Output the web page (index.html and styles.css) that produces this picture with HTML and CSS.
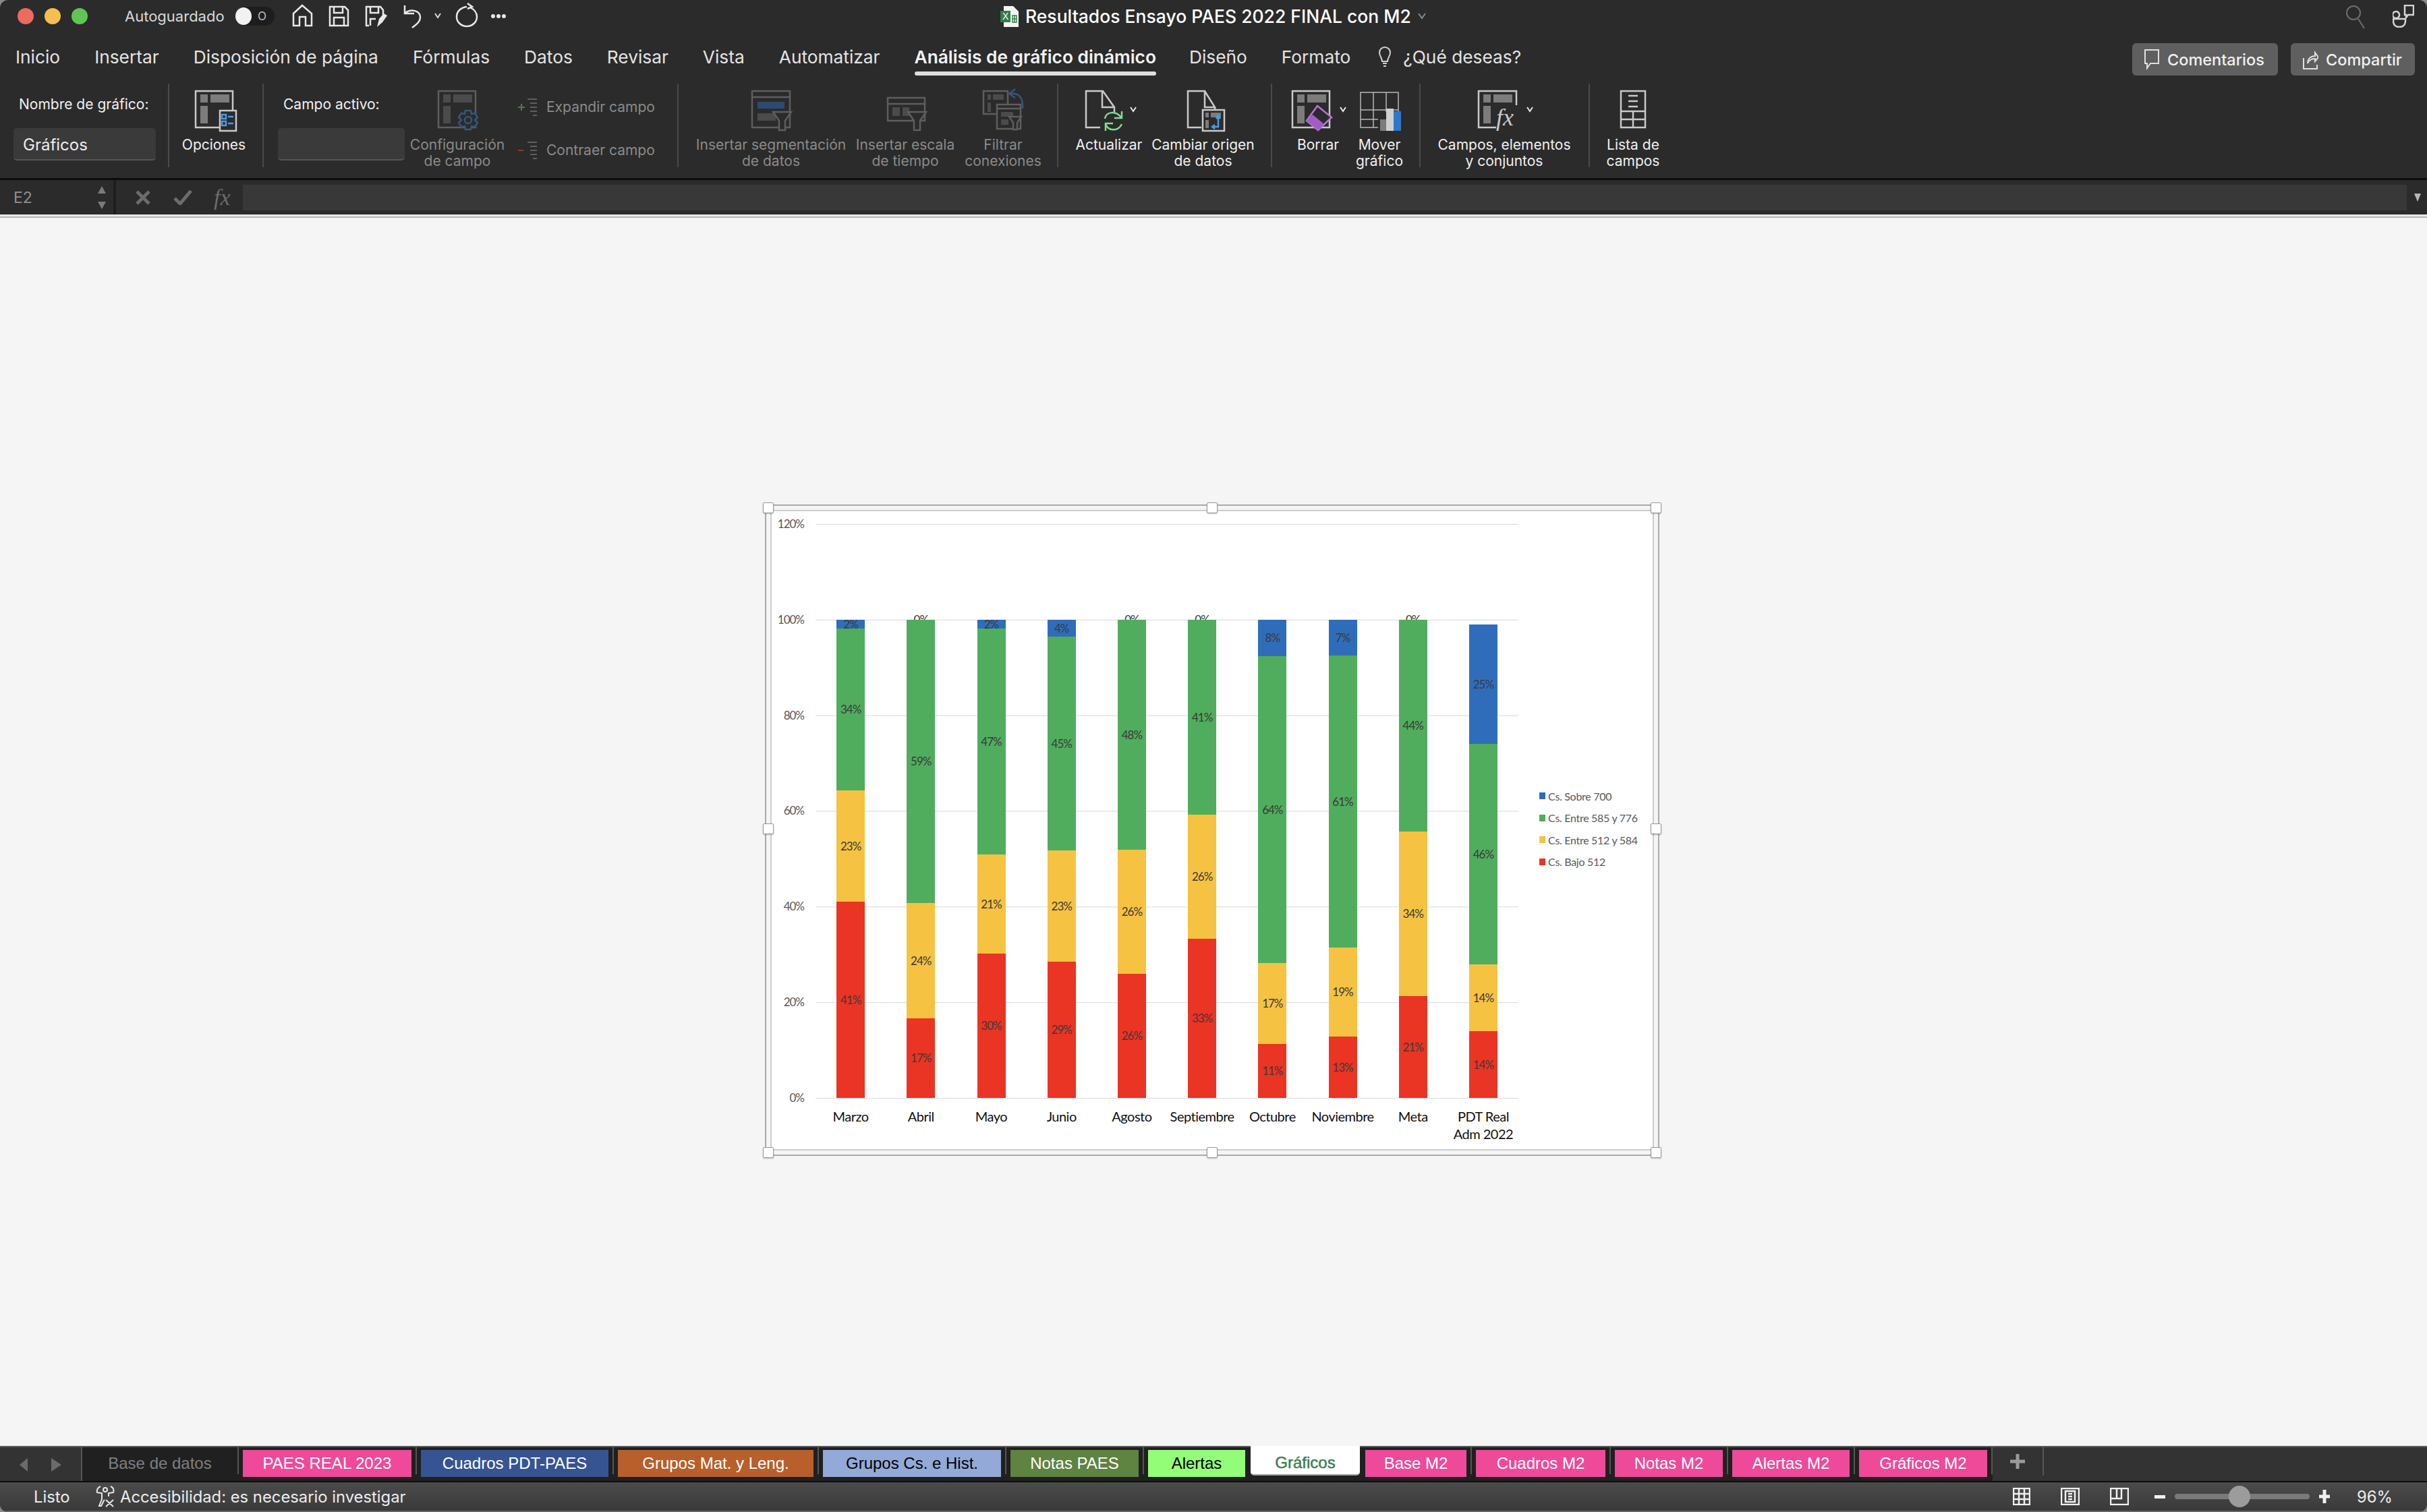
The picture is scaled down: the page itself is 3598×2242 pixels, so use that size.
FILE: index.html
```html
<!DOCTYPE html>
<html lang="es">
<head>
    <meta charset="UTF-8">
    <title>Resultados Ensayo PAES 2022 FINAL con M2</title>
    <link rel="stylesheet" href="styles.css">
</head>
<body>
<div class="app">
    <!-- title bar -->
    <div class="titlebar">
        <span class="light red"></span><span class="light yellow"></span><span class="light green"></span>
        <span class="autosave">Autoguardado</span>
        <span class="toggle"><span class="knob"></span><span class="toggle-o">O</span></span>
        <svg class="qa" width="320" height="40" viewBox="0 0 320 40">
            <path class="qa-line" d="M1 16 14 4 28 16V34H19V21H10V34H1Z"/>
            <path class="qa-line" d="M55 6h22l5 5v23H55ZM61 6v9h13V6M61 34V22h15v12"/>
            <path class="qa-line" d="M113 34h-4V6h21l4 5v9M115 6v9h12V6M115 34V24h8"/>
            <path class="qa-fill" d="M125 36l3-12 7-8 5 3-7 10z"/>
            <path class="qa-line" d="M166 4v12h14M167 15c8-6 22-4 22 7 0 7-7 11-12 15"/>
            <path class="qa-thin" d="M211 16l4 6 4-6"/>
            <path class="qa-line" d="M258 6c-8 1-15 6-15 15 0 8 7 14 15 14s15-6 15-14c0-7-4-11-10-14M259 1l7 5-7 3"/>
            <circle class="qa-dot" cx="305" cy="20" r="3"/><circle class="qa-dot" cx="313" cy="20" r="3"/><circle class="qa-dot" cx="297" cy="20" r="3"/>
        </svg>
        <svg class="file-icon" width="27" height="31" viewBox="0 0 27 31">
            <path class="file-page" d="M5 0h14l8 8v23H5Z"/>
            <rect class="file-x" x="0" y="7" width="15" height="17"/>
            <path class="file-grid" d="M18 14h6v10h-6zM21 14v10M18 19h6"/>
            <text class="file-x-text" x="3" y="20">X</text>
        </svg>
        <span class="doc-title">Resultados Ensayo PAES 2022 FINAL con M2</span>
        <svg class="doc-chevron" width="12" height="10" viewBox="0 0 12 10"><path d="M1 1l5 7 5-7"/></svg>
        <svg class="search" width="30" height="38" viewBox="0 0 30 38"><circle cx="12" cy="14" r="10"/><path d="M19 23l9 14"/></svg>
        <svg class="people" width="32" height="34" viewBox="0 0 32 34">
            <path d="M18 1h13v14h-8l-3 4v-4h-2zM5 10a5 5 0 1 0 .1 0M1 21h18v3c0 6-4 9-9 9s-9-3-9-9z"/>
        </svg>
    </div>

    <!-- ribbon tabs -->
    <div class="tabs">
        <span class="tab">Inicio</span>
        <span class="tab">Insertar</span>
        <span class="tab">Disposición de página</span>
        <span class="tab">Fórmulas</span>
        <span class="tab">Datos</span>
        <span class="tab">Revisar</span>
        <span class="tab">Vista</span>
        <span class="tab">Automatizar</span>
        <span class="tab tab-active">Análisis de gráfico dinámico</span>
        <span class="tab">Diseño</span>
        <span class="tab">Formato</span>
        <svg class="bulb" width="18" height="32" viewBox="0 0 18 32"><path d="M9 1c5 0 8 4 8 8 0 5-4 8-4 13H5c0-5-4-8-4-13 0-4 3-8 8-8zM6 25h6M7 29h4"/></svg>
        <span class="tell-me">¿Qué deseas?</span>
        <span class="tab-btn tab-btn-first">
            <svg class="btn-icon" width="24" height="32" viewBox="0 0 24 32"><path d="M2 2h20v20H10l-5 7v-7H2z"/></svg>Comentarios
        </span>
        <span class="tab-btn tab-btn-last">
            <svg class="btn-icon" width="24" height="32" viewBox="0 0 24 32"><path d="M2 14v16h20v-6M8 22c0-7 5-11 11-11V6l5 7-5 6v-4c-6 0-9 2-11 7z"/></svg>Compartir
        </span>
    </div>

    <!-- ribbon -->
    <div class="ribbon">
        <div class="group group-name">
            <div class="field-col">
                <span class="field-label">Nombre de gráfico:</span>
                <span class="field field-name">Gráficos</span>
            </div>
        </div>

        <div class="group group-options">
            <div class="item item-options">
                <svg class="icon" width="94" height="75" viewBox="0 0 94 75">
                    <path class="ln" d="M20 7h55v54H20z"/>
                    <rect class="fl" x="27" y="12" width="11" height="12"/><rect class="fl" x="42" y="12" width="28" height="12"/><rect class="fl" x="27" y="29" width="11" height="26"/>
                    <rect class="ln bg" x="56" y="36" width="24" height="30"/>
                    <path class="bl" d="M59 42h6v6h-6zM59 52h6v6h-6zM68 45h8M68 55h8"/>
                </svg>
                <span class="item-label">Opciones</span>
            </div>
        </div>

        <div class="group group-field">
            <div class="field-col field-col-active">
                <span class="field-label">Campo activo:</span>
                <span class="field field-active"></span>
            </div>
            <div class="item item-config off">
                <svg class="icon" width="142" height="75" viewBox="0 0 142 75">
                    <path class="ln" d="M43 7h55v54H43z"/>
                    <rect class="fl" x="50" y="12" width="11" height="12"/><rect class="fl" x="65" y="12" width="28" height="12"/><rect class="fl" x="50" y="29" width="11" height="26"/>
                    <path class="dim-bl bg" d="M83 36h8l1 5 5-1 4 6-4 4 4 4-4 6-5-1-1 5h-8l-1-5-5 1-4-6 4-4-4-4 4-6 5 1z"/>
                    <circle class="dim-bl" cx="87" cy="50" r="5"/>
                </svg>
                <span class="item-label">Configuración<br>de campo</span>
            </div>
            <div class="expand-col off">
                <div class="expand-row">
                    <svg width="30" height="26" viewBox="0 0 30 26"><path class="ex-plus" d="M0 13h10M5 8v10"/><path class="ex-line" d="M14 1h14M18 7h10M18 13h10M18 19h10M22 25h6"/></svg>
                    <span>Expandir campo</span>
                </div>
                <div class="expand-row">
                    <svg width="30" height="26" viewBox="0 0 30 26"><path class="ex-minus" d="M0 13h8"/><path class="ex-line" d="M14 1h14M18 7h10M18 13h10M18 19h10M22 25h6"/></svg>
                    <span>Contraer campo</span>
                </div>
            </div>
        </div>

        <div class="group group-insert off">
            <div class="item item-slicer">
                <svg class="icon" width="224" height="75" viewBox="0 0 224 75">
                    <path class="ln" d="M84 7h56v54H84zM84 16h56"/>
                    <rect class="dim-blf" x="92" y="23" width="40" height="10"/>
                    <rect class="fl" x="92" y="40" width="27" height="11"/>
                    <path class="ln bg" d="M115 38h27l-9 13v14h-9V51z"/>
                </svg>
                <span class="item-label">Insertar segmentación<br>de datos</span>
            </div>
            <div class="item item-timeline">
                <svg class="icon" width="152" height="75" viewBox="0 0 152 75">
                    <path class="ln" d="M50 17h55v34H50zM50 26h55"/>
                    <rect class="fl" x="57" y="31" width="11" height="13"/><rect class="fl" x="72" y="31" width="10" height="13"/>
                    <path class="ln bg" d="M80 38h27l-9 13v14h-9V51z"/>
                </svg>
                <span class="item-label">Insertar escala<br>de tiempo</span>
            </div>
            <div class="item item-filter">
                <svg class="icon" width="116" height="75" viewBox="0 0 116 75">
                    <path class="ln" d="M29 7h36v34H29z"/>
                    <rect class="fl" x="35" y="12" width="5" height="8"/><rect class="fl" x="43" y="12" width="16" height="8"/><rect class="fl" x="35" y="24" width="5" height="14"/>
                    <path class="ln bg" d="M49 27h35v36H49zM49 33h35"/>
                    <rect class="fl" x="55" y="38" width="18" height="7"/><rect class="fl" x="55" y="49" width="11" height="8"/>
                    <path class="ln bg" d="M67 45h18l-6 9v10h-6V54z"/>
                    <path class="dim-bl" d="M76 4l-9 7 9 6M68 11c14-2 20 6 19 22"/>
                </svg>
                <span class="item-label">Filtrar<br>conexiones</span>
            </div>
        </div>

        <div class="group group-data">
            <div class="item item-refresh">
                <svg class="icon" width="100" height="75" viewBox="0 0 100 75">
                    <path class="ln" d="M37 61H16V7h25l17 24v7M40 7v24h18"/>
                    <path class="gr" d="M44 48c2-11 16-12 24-2M45 56c4 11 19 11 24 0M69 37v10H58M45 66V55h11"/>
                    <path class="chev" d="M82 31l4 6 4-6"/>
                </svg>
                <span class="item-label">Actualizar</span>
            </div>
            <div class="item item-source">
                <svg class="icon" width="153" height="75" viewBox="0 0 153 75">
                    <path class="ln" d="M74 61H54V7h25l15 24h-15V7M94 31v4"/>
                    <rect class="ln bg" x="76" y="35" width="32" height="31"/>
                    <rect class="fl" x="80" y="39" width="5" height="7"/><rect class="fl" x="88" y="39" width="15" height="7"/><rect class="fl" x="80" y="50" width="5" height="12"/>
                    <path class="bl" d="M99 44v16h-8M96 48l3-5 3 5M94 57l-4 3 4 3"/>
                </svg>
                <span class="item-label">Cambiar origen<br>de datos</span>
            </div>
        </div>

        <div class="group group-tools">
            <div class="item item-clear">
                <svg class="icon" width="62" height="75" viewBox="0 0 62 75">
                    <path class="ln" d="M-7 7h55v54H-7z"/>
                    <rect class="fl" x="0" y="12" width="11" height="12"/><rect class="fl" x="15" y="12" width="28" height="12"/><rect class="fl" x="0" y="29" width="11" height="26"/>
                    <path class="pu bg" d="M30 29 51 46 31 65 14 51z"/>
                    <path class="pu-fill" d="M14 51l9-9 17 14-9 9z"/>
                    <path class="chev" d="M64 31l4 6 4-6"/>
                </svg>
                <span class="item-label">Borrar</span>
            </div>
            <div class="item item-move">
                <svg class="icon" width="72" height="75" viewBox="0 0 72 75">
                    <path class="ln-thin" d="M8 9h56v52H8zM8 35h56M8 49h56M27 9v52M46 9v52"/>
                    <rect class="bg" x="34" y="38" width="34" height="30"/>
                    <rect class="fl" x="37" y="49" width="9" height="17"/><rect class="wh" x="46" y="33" width="11" height="33"/><rect class="blf" x="57" y="37" width="11" height="29"/>
                </svg>
                <span class="item-label">Mover<br>gráfico</span>
            </div>
        </div>

        <div class="group group-fields">
            <div class="item item-calc">
                <svg class="icon" width="200" height="75" viewBox="0 0 200 75">
                    <path class="ln" d="M62 7h56v54H62z"/>
                    <rect class="fl" x="69" y="12" width="11" height="12"/><rect class="fl" x="84" y="12" width="28" height="12"/><rect class="fl" x="69" y="29" width="11" height="26"/>
                    <rect class="bg" x="88" y="28" width="32" height="38"/>
                    <text class="fx-icon" x="88" y="58">fx</text>
                    <path class="chev" d="M134 31l4 6 4-6"/>
                </svg>
                <span class="item-label">Campos, elementos<br>y conjuntos</span>
            </div>
        </div>

        <div class="group group-list">
            <div class="item item-list">
                <svg class="icon" width="80" height="75" viewBox="0 0 80 75">
                    <path class="ln" d="M22 7h36v54H22zM22 37h36M22 49h36M40 37v24"/>
                    <path class="ln" d="M33 14h14M33 22h14M33 30h14"/>
                </svg>
                <span class="item-label">Lista de<br>campos</span>
            </div>
        </div>
    </div>

    <!-- formula bar -->
    <div class="formula">
        <div class="namebox">
            <span>E2</span>
            <svg class="spin" width="12" height="34" viewBox="0 0 12 34"><path d="M6 0l6 11H0zM6 34 0 23h12z"/></svg>
        </div>
        <svg class="f-cancel" width="22" height="22" viewBox="0 0 22 22"><path d="M2 2l18 18M20 2 2 20"/></svg>
        <svg class="f-ok" width="28" height="22" viewBox="0 0 28 22"><path d="M2 12l8 8L26 1"/></svg>
        <span class="f-fx">fx</span>
        <div class="f-input"></div>
        <svg class="f-drop" width="10" height="12" viewBox="0 0 10 12"><path d="M0 0h10L5 12z"/></svg>
    </div>
    <div class="sheet-top"></div>

    <!-- sheet with pivot chart -->
    <div class="canvas">
        <div class="chart-frame">
            <span class="handle h-tl"></span><span class="handle h-tm"></span><span class="handle h-tr"></span>
            <span class="handle h-ml"></span><span class="handle h-mr"></span>
            <span class="handle h-bl"></span><span class="handle h-bm"></span><span class="handle h-br"></span>
            <div class="chart">
                <div class="y-axis">
                    <span>120%</span><span>100%</span><span>80%</span><span>60%</span><span>40%</span><span>20%</span><span>0%</span>
                </div>
                <div class="plot-col">
                    <div class="plot">
                        <div class="col">
                            <div class="seg blue" style="height:13px"><span>2%</span></div>
                            <div class="seg grn" style="height:240px"><span>34%</span></div>
                            <div class="seg yel" style="height:165px"><span>23%</span></div>
                            <div class="seg rd" style="height:291px"><span>41%</span></div>
                        </div>
                        <div class="col">
                            <div class="seg" style="height:0"><span>0%</span></div>
                            <div class="seg grn" style="height:420px"><span>59%</span></div>
                            <div class="seg yel" style="height:171px"><span>24%</span></div>
                            <div class="seg rd" style="height:118px"><span>17%</span></div>
                        </div>
                        <div class="col">
                            <div class="seg blue" style="height:13px"><span>2%</span></div>
                            <div class="seg grn" style="height:335px"><span>47%</span></div>
                            <div class="seg yel" style="height:147px"><span>21%</span></div>
                            <div class="seg rd" style="height:214px"><span>30%</span></div>
                        </div>
                        <div class="col">
                            <div class="seg blue" style="height:25px"><span>4%</span></div>
                            <div class="seg grn" style="height:317px"><span>45%</span></div>
                            <div class="seg yel" style="height:165px"><span>23%</span></div>
                            <div class="seg rd" style="height:202px"><span>29%</span></div>
                        </div>
                        <div class="col">
                            <div class="seg" style="height:0"><span>0%</span></div>
                            <div class="seg grn" style="height:341px"><span>48%</span></div>
                            <div class="seg yel" style="height:184px"><span>26%</span></div>
                            <div class="seg rd" style="height:184px"><span>26%</span></div>
                        </div>
                        <div class="col">
                            <div class="seg" style="height:0"><span>0%</span></div>
                            <div class="seg grn" style="height:289px"><span>41%</span></div>
                            <div class="seg yel" style="height:184px"><span>26%</span></div>
                            <div class="seg rd" style="height:236px"><span>33%</span></div>
                        </div>
                        <div class="col">
                            <div class="seg blue" style="height:54px"><span>8%</span></div>
                            <div class="seg grn" style="height:455px"><span>64%</span></div>
                            <div class="seg yel" style="height:120px"><span>17%</span></div>
                            <div class="seg rd" style="height:80px"><span>11%</span></div>
                        </div>
                        <div class="col">
                            <div class="seg blue" style="height:53px"><span>7%</span></div>
                            <div class="seg grn" style="height:433px"><span>61%</span></div>
                            <div class="seg yel" style="height:132px"><span>19%</span></div>
                            <div class="seg rd" style="height:91px"><span>13%</span></div>
                        </div>
                        <div class="col">
                            <div class="seg" style="height:0"><span>0%</span></div>
                            <div class="seg grn" style="height:314px"><span>44%</span></div>
                            <div class="seg yel" style="height:244px"><span>34%</span></div>
                            <div class="seg rd" style="height:151px"><span>21%</span></div>
                        </div>
                        <div class="col">
                            <div class="seg blue" style="height:177px"><span>25%</span></div>
                            <div class="seg grn" style="height:327px"><span>46%</span></div>
                            <div class="seg yel" style="height:99px"><span>14%</span></div>
                            <div class="seg rd" style="height:99px"><span>14%</span></div>
                        </div>
                    </div>
                    <div class="x-axis">
                        <span>Marzo</span><span>Abril</span><span>Mayo</span><span>Junio</span><span>Agosto</span>
                        <span>Septiembre</span><span>Octubre</span><span>Noviembre</span><span>Meta</span><span>PDT Real<br>Adm 2022</span>
                    </div>
                </div>
                <div class="legend">
                    <div class="legend-row"><i class="swatch blue"></i>Cs. Sobre 700</div>
                    <div class="legend-row"><i class="swatch grn"></i>Cs. Entre 585 y 776</div>
                    <div class="legend-row"><i class="swatch yel"></i>Cs. Entre 512 y 584</div>
                    <div class="legend-row"><i class="swatch rd"></i>Cs. Bajo 512</div>
                </div>
            </div>
        </div>
    </div>

    <!-- sheet tabs -->
    <div class="sheetbar">
        <div class="sheet-nav">
            <svg width="66" height="20" viewBox="0 0 66 20"><path d="M15 0v20L3 10zM50 0v20l15-10z"/></svg>
        </div>
        <div class="sheets">
            <span class="sheet sheet-plain">Base de datos</span><i class="sep"></i>
            <span class="sheet pink s-paes">PAES REAL 2023</span><i class="sep"></i>
            <span class="sheet navy s-cuadros">Cuadros PDT-PAES</span><i class="sep"></i>
            <span class="sheet rust s-mat">Grupos Mat. y Leng.</span><i class="sep"></i>
            <span class="sheet lav s-hist">Grupos Cs. e Hist.</span><i class="sep"></i>
            <span class="sheet olive s-notas">Notas PAES</span><i class="sep"></i>
            <span class="sheet lime s-alertas">Alertas</span>
            <span class="sheet sheet-active">Gráficos</span>
            <span class="sheet pink s-base2">Base M2</span><i class="sep"></i>
            <span class="sheet pink s-cuadros2">Cuadros M2</span><i class="sep"></i>
            <span class="sheet pink s-notas2">Notas M2</span><i class="sep"></i>
            <span class="sheet pink s-alertas2">Alertas M2</span><i class="sep"></i>
            <span class="sheet pink s-graf2">Gráficos M2</span><i class="sep"></i>
        </div>
        <div class="sheet-add"><svg width="22" height="22" viewBox="0 0 22 22"><path d="M11 0v22M0 11h22"/></svg></div>
    </div>

    <!-- status bar -->
    <div class="statusbar">
        <span class="st-ready">Listo</span>
        <svg class="st-a11y" width="31" height="32" viewBox="0 0 31 32">
            <path d="M8 1c-5 2-6 7-5 9l7 1v9l-4 10h3l4-8 1-1M23 1c5 2 5 7 4 9l-7 1v5M12 6a3 3 0 1 0 6 0 3 3 0 1 0-6 0M16 21l11 10M27 21 16 31"/>
        </svg>
        <span class="st-text">Accesibilidad: es necesario investigar</span>
        <svg class="st-view first" width="26" height="26" viewBox="0 0 26 26"><path d="M1 1h24v24H1zM1 9h24M1 17h24M9 1v24M17 1v24"/></svg>
        <svg class="st-view" width="28" height="26" viewBox="0 0 28 26"><path d="M1 1h26v24H1zM7 5h14v16H7zM11 9h6M11 13h6M11 17h6"/></svg>
        <svg class="st-view" width="28" height="26" viewBox="0 0 28 26"><path d="M1 1h26v24H1zM1 16h16V1M10 1v15"/></svg>
        <span class="zoom-minus"></span>
        <div class="zoom-track"><span class="zoom-knob"></span></div>
        <svg class="zoom-plus" width="16" height="28" viewBox="0 0 16 28"><path d="M0 14h16M8 4v20"/></svg>
        <span class="zoom-val">96%</span>
    </div>
</div>
</body>
</html>
```
FILE: styles.css
```css
* {
    box-sizing: border-box;
}
html, body {
    margin: 0;
    background: #8a8a8a;
}
body {
    width: 3598px;
    height: 2242px;
    overflow: hidden;
    font-family: Inter, Roboto, sans-serif;
}
.app {
    width: 3598px;
    height: 2242px;
    display: flex;
    flex-direction: column;
    background: #2b2b2b;
    border-radius: 12px;
    overflow: hidden;
}

/* title bar */
.titlebar {
    height: 55px;
    flex-shrink: 0;
    display: flex;
    align-items: center;
    padding: 0 0 7px 26px;
    color: #e6e6e6;
}
.light {
    width: 24px;
    height: 24px;
    border-radius: 50%;
    margin-right: 16px;
}
.light.red { background: #ed6a5e; }
.light.yellow { background: #f5bf4f; }
.light.green { background: #61c554; }
.autosave {
    margin-left: 39px;
    width: 164px;
    font-size: 22px;
    color: #d8d8d8;
}
.toggle {
    width: 58px;
    height: 28px;
    border-radius: 14px;
    background: #1d1d1d;
    display: flex;
    align-items: center;
}
.knob {
    width: 24px;
    height: 26px;
    border-radius: 50%;
    background: #f2f2f2;
}
.toggle-o {
    margin-left: 9px;
    font-size: 17px;
    color: #bdbdbd;
}
.qa {
    margin-left: 27px;
    overflow: visible;
}
.qa-line {
    fill: none;
    stroke: #e8e8e8;
    stroke-width: 2.5;
}
.qa-thin {
    fill: none;
    stroke: #dcdcdc;
    stroke-width: 2;
}
.qa-fill { fill: #e8e8e8; }
.qa-dot { fill: #e8e8e8; }
.file-icon {
    margin-left: 729px;
}
.file-page { fill: #f4f4f4; }
.file-x { fill: #2f7d4c; }
.file-grid {
    fill: none;
    stroke: #2f7d4c;
    stroke-width: 1.5;
}
.file-x-text {
    font-size: 14px;
    fill: #fff;
    font-family: "Liberation Sans", sans-serif;
}
.doc-title {
    margin-left: 10px;
    font-size: 26.5px;
    font-weight: 500;
    color: #fff;
    white-space: nowrap;
}
.doc-chevron {
    margin-left: 10px;
    fill: none;
    stroke: #8a8a8a;
    stroke-width: 2;
}
.search {
    margin-left: auto;
    fill: none;
    stroke: #6e6e6e;
    stroke-width: 2;
}
.people {
    margin-left: 40px;
    margin-right: 19px;
    fill: none;
    stroke: #d4d4d4;
    stroke-width: 2.5;
}

/* ribbon tabs */
.tabs {
    height: 65px;
    flex-shrink: 0;
    display: flex;
    align-items: flex-start;
    padding-left: 23px;
    color: #e4e4e4;
    font-size: 26.3px;
    position: relative;
}
.tab {
    margin-right: 51px;
    margin-top: 12px;
    line-height: 36px;
    white-space: nowrap;
}
.tab-active {
    font-weight: 600;
    color: #f2f2f2;
    position: relative;
    margin-right: 49px;
}
.tab-active::after {
    content: "";
    position: absolute;
    left: 0;
    right: 0;
    top: 39px;
    height: 6px;
    border-radius: 3px;
    background: #dedede;
}
.bulb {
    margin-top: 14px;
    margin-left: -9px;
    fill: none;
    stroke: #d0d0d0;
    stroke-width: 2;
}
.tell-me {
    margin-left: 18px;
    margin-top: 12px;
    line-height: 36px;
}
.tab-btn {
    height: 48px;
    margin-top: 9px;
    padding-left: 17px;
    display: flex;
    align-items: center;
    gap: 11px;
    background: #5f5f5f;
    border-radius: 6px;
    font-size: 23.5px;
    font-weight: 500;
    color: #f0f0f0;
    white-space: nowrap;
}
.tab-btn-first {
    width: 216px;
    margin-left: auto;
}
.tab-btn-last {
    width: 184px;
    margin-left: 19px;
    margin-right: 18px;
}
.btn-icon {
    fill: none;
    stroke: #e0e0e0;
    stroke-width: 2;
}

/* ribbon */
.ribbon {
    height: 147px;
    flex-shrink: 0;
    padding-top: 4px;
    display: flex;
    align-items: flex-start;
    border-bottom: 3px solid #0c0c0c;
}
.group {
    height: 124px;
    display: flex;
    flex-shrink: 0;
    border-right: 2px solid #4a4a4a;
}
.group-name { width: 251px; padding-left: 20px; }
.group-options { width: 140px; padding-left: 19px; }
.group-field { width: 615px; padding-left: 21px; }
.group-insert { width: 563px; padding-left: 25px; gap: 11px; }
.group-data { width: 317px; padding-left: 25px; gap: 13px; }
.group-tools { width: 220px; padding-left: 37px; gap: 24px; }
.group-fields { width: 251px; padding-left: 24px; }
.group-list { width: 100px; padding-left: 24px; border-right: none; }

.field-col {
    width: 211px;
    padding-top: 16px;
    display: flex;
    flex-direction: column;
}
.field-col-active { width: 188px; }
.field-label {
    font-size: 21px;
    line-height: 30px;
    color: #f0f0f0;
    white-space: nowrap;
    padding-left: 8px;
}
.field {
    height: 48px;
    margin-top: 20px;
    padding: 2px 0 0 14px;
    display: flex;
    align-items: center;
    background: #3a3a3a;
    border-radius: 5px;
    border-bottom: 2px solid #555;
    font-size: 24px;
    color: #ededed;
}
.item {
    padding-top: 4px;
    display: flex;
    flex-direction: column;
    align-items: center;
    flex-shrink: 0;
}
.icon {
    flex-shrink: 0;
    overflow: visible;
}
.item-label {
    display: block;
    font-size: 21px;
    line-height: 24px;
    text-align: center;
    color: #f0f0f0;
    white-space: nowrap;
}
.off .item-label, .off.item .item-label, .expand-col { color: #8a8a8a; }
.item-options { width: 94px; }
.item-config { width: 142px; margin-left: 7px; }
.item-slicer { width: 224px; }
.item-timeline { width: 152px; }
.item-filter { width: 116px; }
.item-refresh { width: 100px; }
.item-source { width: 153px; }
.item-clear { width: 62px; }
.item-move { width: 72px; }
.item-calc { width: 200px; }
.item-list { width: 80px; }

/* icon parts */
.ln {
    fill: none;
    stroke: #c9c9c9;
    stroke-width: 2.5;
}
.ln-thin {
    fill: none;
    stroke: #b8b8b8;
    stroke-width: 1.5;
}
.bg { fill: #2b2b2b; }
.fl { fill: #7c7c7c; }
.wh { fill: #d0d0d0; }
.bl {
    fill: none;
    stroke: #4a9be0;
    stroke-width: 2.5;
}
.blf { fill: #2f77c8; }
.gr {
    fill: none;
    stroke: #7fdc8f;
    stroke-width: 2.5;
}
.pu {
    stroke: #b775d8;
    stroke-width: 2.5;
}
.pu-fill { fill: #a25cc6; }
.chev {
    fill: none;
    stroke: #e8e8e8;
    stroke-width: 2;
}
.fx-icon {
    font-family: "Liberation Serif", serif;
    font-style: italic;
    font-size: 36px;
    fill: #c9c9c9;
}
.off .ln { stroke: #5e5e5e; }
.off .fl { fill: #4b4b4b; }
.dim-bl {
    fill: none;
    stroke: #36567c;
    stroke-width: 2.5;
}
.dim-bl.bg { fill: #2b2b2b; }
.dim-blf { fill: #2f4a70; }
.expand-col {
    width: 203px;
    margin-left: 19px;
    padding-top: 22px;
    font-size: 21px;
}
.expand-row {
    height: 64px;
    display: flex;
    align-items: flex-start;
    gap: 12px;
    white-space: nowrap;
    line-height: 26px;
}
.expand-row svg { flex-shrink: 0; }
.ex-line {
    fill: none;
    stroke: #5e5e5e;
    stroke-width: 2;
}
.ex-plus {
    fill: none;
    stroke: #4f7a50;
    stroke-width: 2;
}
.ex-minus {
    fill: none;
    stroke: #8a3c36;
    stroke-width: 2;
}

/* formula bar */
.formula {
    height: 51px;
    display: flex;
    align-items: center;
    flex-shrink: 0;
}
.namebox {
    width: 172px;
    height: 51px;
    border-right: 4px solid #1e1e1e;
    padding: 0 11px 0 20px;
    display: flex;
    align-items: center;
    justify-content: space-between;
    font-size: 23px;
    color: #8f8f8f;
}
.spin { fill: #7a7a7a; }
.f-cancel {
    margin-left: 29px;
    fill: none;
    stroke: #6c6c6c;
    stroke-width: 5;
}
.f-ok {
    margin-left: 34px;
    fill: none;
    stroke: #6c6c6c;
    stroke-width: 5;
}
.f-fx {
    margin-left: 32px;
    width: 28px;
    font-family: "Liberation Serif", serif;
    font-style: italic;
    font-size: 34px;
    color: #6c6c6c;
}
.f-input {
    width: 3208px;
    height: 38px;
    margin-left: 15px;
    background: #383838;
}
.f-drop {
    margin-left: 11px;
    fill: #b5b5b5;
}
.sheet-top {
    height: 5px;
    flex-shrink: 0;
    background: #e9e9e9;
    border-bottom: 2px solid #b5b5b5;
}

/* sheet and chart */
.canvas {
    height: 1821px;
    flex-shrink: 0;
    padding: 425px 0 0 1134px;
    background: #f5f5f5;
}
.chart-frame {
    position: relative;
    width: 1326px;
    height: 966px;
    padding: 6px;
    border: 2px solid #ababab;
}
.handle {
    position: absolute;
    width: 16px;
    height: 16px;
    background: #fff;
    border: 1px solid #9a9a9a;
    border-radius: 2px;
    box-shadow: 0 1px 2px rgba(0, 0, 0, 0.25);
    z-index: 2;
}
.h-tl, .h-tm, .h-tr { top: -5px; }
.h-bl, .h-bm, .h-br { bottom: -5px; }
.h-tl, .h-ml, .h-bl { left: -5px; }
.h-tr, .h-mr, .h-br { right: -5px; }
.h-tm, .h-bm { left: 653px; }
.h-ml, .h-mr { top: 471px; }

.chart {
    width: 100%;
    height: 100%;
    display: flex;
    padding-top: 19px;
    background: #fff;
    border: 2px solid #cdcdcd;
    font-family: Lato, "Open Sans", sans-serif;
}
.y-axis {
    width: 65px;
    height: 852px;
    flex-shrink: 0;
    padding-right: 17px;
    display: flex;
    flex-direction: column;
    justify-content: space-between;
    align-items: flex-end;
    font-size: 17px;
    letter-spacing: -1px;
    color: #595959;
}
.y-axis span {
    height: 1px;
    line-height: 0;
}
.plot-col {
    width: 1042px;
    flex-shrink: 0;
}
.plot {
    height: 852px;
    display: flex;
    background-image: linear-gradient(#d9d9d9 1px, transparent 1px);
    background-size: 100% 141.83px;
}
.col {
    flex: 1;
    display: flex;
    flex-direction: column;
    justify-content: flex-end;
    align-items: center;
    padding-bottom: 1px;
}
.seg {
    width: 42px;
    flex-shrink: 0;
    display: flex;
    align-items: center;
    justify-content: center;
    font-size: 17px;
    letter-spacing: -1px;
    color: #3a3a3a;
}
.seg span {
    line-height: 0;
}
.blue { background: #2f6dbb; }
.grn { background: #50ad5d; }
.yel { background: #f5c242; }
.rd { background: #ea3424; }
.x-axis {
    display: flex;
    margin-top: 13px;
    font-size: 20px;
    line-height: 26px;
    letter-spacing: -0.5px;
    color: #111;
    text-align: center;
}
.x-axis span {
    flex: 1;
    white-space: nowrap;
}
.legend {
    margin-left: 31px;
    padding-top: 387px;
    font-size: 16px;
    letter-spacing: -0.3px;
    color: #595959;
}
.legend-row {
    height: 32.5px;
    display: flex;
    align-items: center;
    white-space: nowrap;
}
.swatch {
    width: 9px;
    height: 10px;
    margin-right: 4px;
}

/* sheet tabs */
.sheetbar {
    height: 52px;
    display: flex;
    flex-shrink: 0;
    background: #333;
    border-top: 2px solid #5a5a5a;
}
.sheet-nav {
    width: 122px;
    padding: 16px 0 0 26px;
    border-right: 2px solid #555;
    fill: #6b6b6b;
}
.sheets {
    display: flex;
    align-items: flex-start;
    height: 50px;
    background: #202020;
}
.sheet {
    height: 40px;
    margin: 4px 6px 0;
    display: flex;
    align-items: center;
    justify-content: center;
    font-family: "Liberation Sans", sans-serif;
    font-size: 24px;
    white-space: nowrap;
    color: #fff;
}
.sep {
    width: 2px;
    height: 40px;
    background: #555;
}
.sheet-plain {
    width: 230px;
    margin: 4px 0 0 0;
    color: #7f7f7f;
}
.sheet-active {
    width: 162px;
    height: 44px;
    margin: -2px 2px 0;
    padding-top: 8px;
    background: #fff;
    color: #3f7d55;
    -webkit-text-stroke: 0.5px #3f7d55;
    border-radius: 0 0 5px 5px;
    border-bottom: 2px solid #9a9a9a;
}
.s-paes { width: 250px; }
.s-cuadros { width: 278px; }
.s-mat { width: 290px; }
.s-hist { width: 264px; }
.s-notas { width: 190px; }
.s-alertas { width: 144px; }
.s-base2 { width: 150px; }
.s-cuadros2 { width: 192px; }
.s-notas2 { width: 160px; }
.s-alertas2 { width: 174px; }
.s-graf2 { width: 190px; }
.pink { background: #ee4a99; }
.navy { background: #375492; }
.rust { background: #b85f2b; }
.lav { background: #93a9d8; color: #000; }
.olive { background: #5f8340; }
.lime { background: #94fd78; color: #000; }
.sheet-add {
    width: 76px;
    height: 42px;
    display: flex;
    align-items: center;
    justify-content: center;
    border-right: 2px solid #555;
    stroke: #9a9a9a;
    stroke-width: 5;
    fill: none;
}

/* status bar */
.statusbar {
    flex: 1;
    display: flex;
    align-items: center;
    padding-left: 50px;
    border-top: 2px solid #0c0c0c;
    background: linear-gradient(#4b4b4b, #3a3a3a);
    border-bottom: 2px solid #666;
    font-size: 23.8px;
    color: #ececec;
}
.st-ready {
    width: 55px;
}
.st-a11y {
    margin-left: 36px;
    fill: none;
    stroke: #e8e8e8;
    stroke-width: 2;
}
.st-text {
    margin-left: 6px;
}
.st-view {
    margin-left: 45px;
    fill: none;
    stroke: #f0f0f0;
    stroke-width: 2.5;
}
.st-view.first {
    margin-left: auto;
}
.zoom-minus {
    width: 16px;
    height: 5px;
    margin-left: 38px;
    background: #f0f0f0;
}
.zoom-track {
    position: relative;
    width: 200px;
    height: 8px;
    margin-left: 14px;
    border-radius: 4px;
    background: #7a7a7a;
}
.zoom-knob {
    position: absolute;
    left: 80px;
    top: -12px;
    width: 32px;
    height: 32px;
    border-radius: 50%;
    background: #9c9c9c;
}
.zoom-plus {
    margin-left: 14px;
    stroke: #f0f0f0;
    stroke-width: 5;
}
.zoom-val {
    margin-left: 40px;
    margin-right: 52px;
    width: 52px;
    white-space: nowrap;
}
```
